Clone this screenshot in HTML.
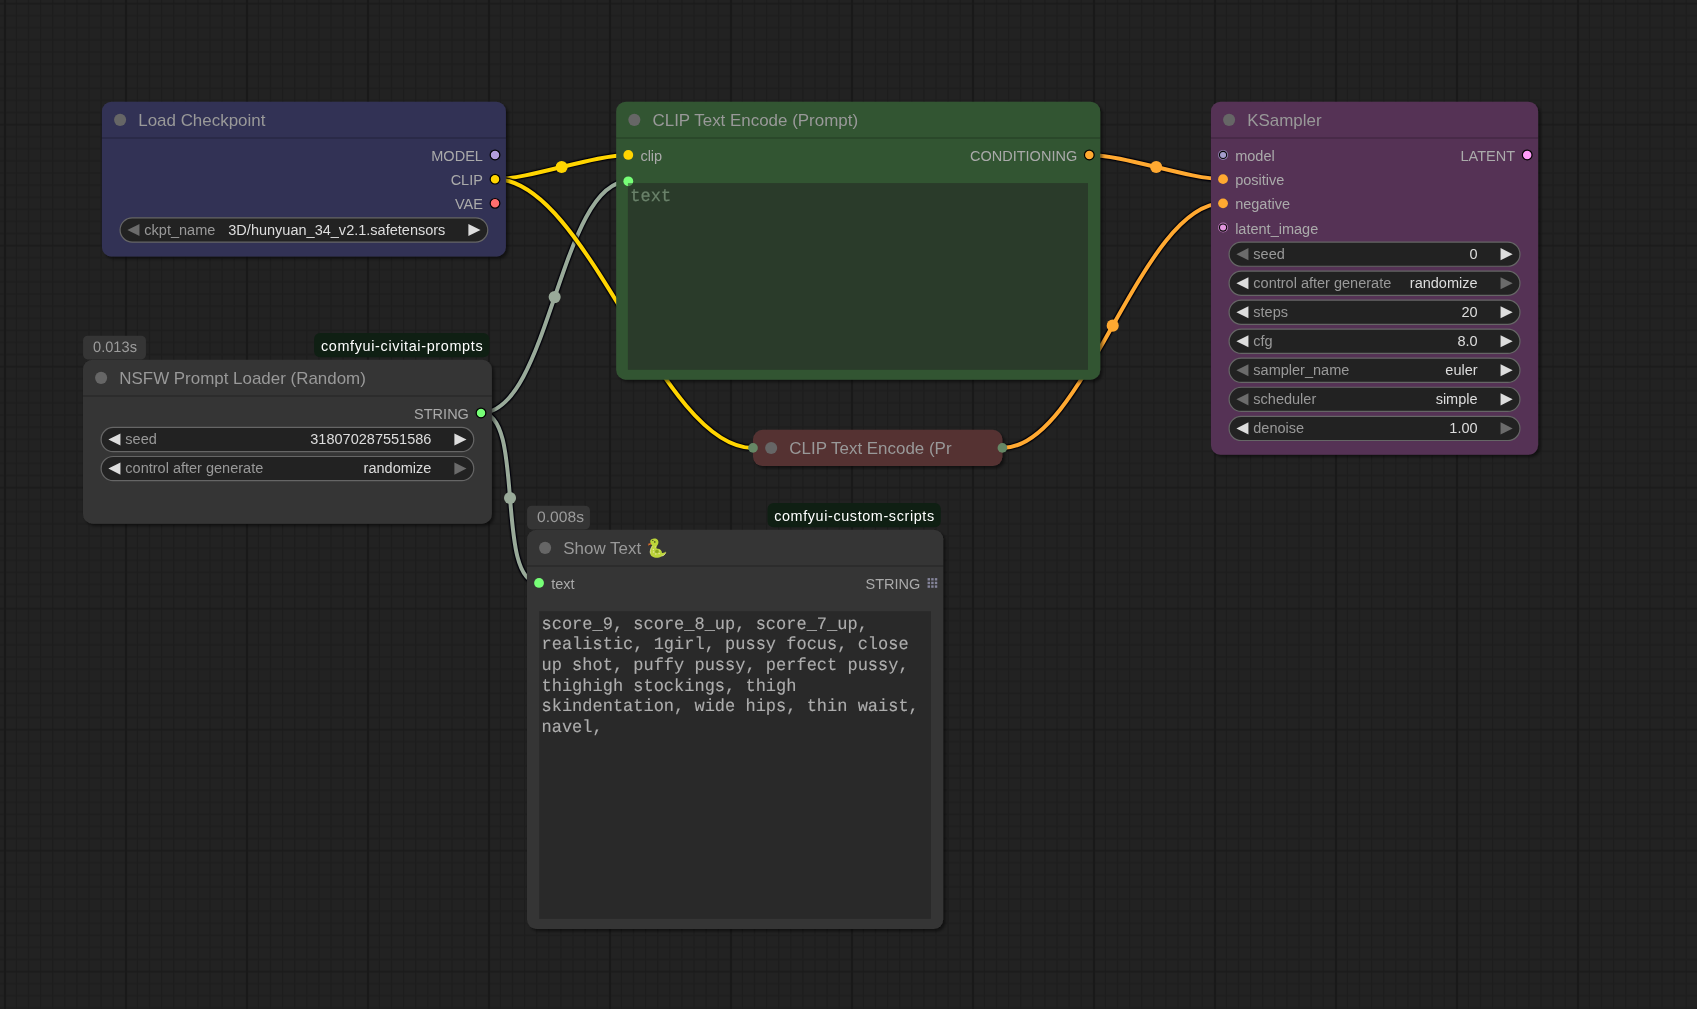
<!DOCTYPE html>
<html lang="en"><head><meta charset="utf-8"><title>ComfyUI</title>
<style>html,body{margin:0;padding:0;background:#222;overflow:hidden}body{width:1697px;height:1009px;font-family:"Liberation Sans",sans-serif}svg{display:block;opacity:.999}svg text{font-family:"Liberation Sans",sans-serif;white-space:pre}svg text.mono{font-family:"Liberation Mono",monospace}</style></head><body>
<svg width="1697" height="1009" viewBox="0 0 1697 1009">
<defs><pattern id="grid" x="5" y="3.6" width="121" height="121" patternUnits="userSpaceOnUse"><rect width="121" height="121" fill="#222"/><g fill="#1d1d1d"><rect x="10.68" y="0" width="1.4" height="121"/><rect x="22.78" y="0" width="1.4" height="121"/><rect x="34.88" y="0" width="1.4" height="121"/><rect x="46.98" y="0" width="1.4" height="121"/><rect x="59.08" y="0" width="1.4" height="121"/><rect x="71.18" y="0" width="1.4" height="121"/><rect x="83.28" y="0" width="1.4" height="121"/><rect x="95.38" y="0" width="1.4" height="121"/><rect x="107.48" y="0" width="1.4" height="121"/><rect x="0" y="11.38" width="121" height="1.4"/><rect x="0" y="23.48" width="121" height="1.4"/><rect x="0" y="35.58" width="121" height="1.4"/><rect x="0" y="47.68" width="121" height="1.4"/><rect x="0" y="59.78" width="121" height="1.4"/><rect x="0" y="71.88" width="121" height="1.4"/><rect x="0" y="83.98" width="121" height="1.4"/><rect x="0" y="96.08" width="121" height="1.4"/><rect x="0" y="108.18" width="121" height="1.4"/></g><g fill="#191919"><rect x="0" y="0" width="1.15" height="121"/><rect x="119.85" y="0" width="1.15" height="121"/><rect x="0" y="0" width="121" height=".7"/><rect x="0" y="120.3" width="121" height=".7"/></g></pattern><filter id="sh" x="-5%" y="-5%" width="110%" height="115%"><feDropShadow dx="2.42" dy="2.42" stdDeviation="1.81" flood-color="#000" flood-opacity=".5"/></filter></defs>
<rect width="1697" height="1009" fill="url(#grid)"/>
<g stroke-linecap="butt">
<path d="M495.01 179.14C528.88 179.14 594.43 154.94 628.3 154.94" fill="none" stroke="#000" stroke-opacity=".16" stroke-width="8.8"/>
<path d="M495.01 179.14C528.88 179.14 594.43 154.94 628.3 154.94" fill="none" stroke="#00000a" stroke-opacity=".85" stroke-width="6.4"/>
<path d="M495.01 179.14C528.88 179.14 594.43 154.94 628.3 154.94" fill="none" stroke="#FFD500" stroke-width="4"/>
<circle cx="561.65" cy="167.04" r="6.05" fill="#FFD500"/>
<path d="M481.01 412.94C549.64 412.94 559.67 181.3 628.3 181.3" fill="none" stroke="#000" stroke-opacity=".16" stroke-width="8.8"/>
<path d="M481.01 412.94C549.64 412.94 559.67 181.3 628.3 181.3" fill="none" stroke="#00000a" stroke-opacity=".85" stroke-width="6.4"/>
<path d="M481.01 412.94C549.64 412.94 559.67 181.3 628.3 181.3" fill="none" stroke="#99AA99" stroke-width="4"/>
<circle cx="554.65" cy="297.12" r="6.05" fill="#99AA99"/>
<path d="M1089.31 154.94C1123.29 154.94 1189.07 179.14 1223.05 179.14" fill="none" stroke="#000" stroke-opacity=".16" stroke-width="8.8"/>
<path d="M1089.31 154.94C1123.29 154.94 1189.07 179.14 1223.05 179.14" fill="none" stroke="#00000a" stroke-opacity=".85" stroke-width="6.4"/>
<path d="M1089.31 154.94C1123.29 154.94 1189.07 179.14 1223.05 179.14" fill="none" stroke="#FFA931" stroke-width="4"/>
<circle cx="1156.18" cy="167.04" r="6.05" fill="#FFA931"/>
<path d="M495.01 179.14C588.16 179.14 659.85 447.95 753 447.95" fill="none" stroke="#000" stroke-opacity=".16" stroke-width="8.8"/>
<path d="M495.01 179.14C588.16 179.14 659.85 447.95 753 447.95" fill="none" stroke="#00000a" stroke-opacity=".85" stroke-width="6.4"/>
<path d="M495.01 179.14C588.16 179.14 659.85 447.95 753 447.95" fill="none" stroke="#FFD500" stroke-width="4"/>
<circle cx="624" cy="313.54" r="6.05" fill="#FFD500"/>
<path d="M1002.4 447.95C1084.76 447.95 1140.69 203.34 1223.05 203.34" fill="none" stroke="#000" stroke-opacity=".16" stroke-width="8.8"/>
<path d="M1002.4 447.95C1084.76 447.95 1140.69 203.34 1223.05 203.34" fill="none" stroke="#00000a" stroke-opacity=".85" stroke-width="6.4"/>
<path d="M1002.4 447.95C1084.76 447.95 1140.69 203.34 1223.05 203.34" fill="none" stroke="#FFA931" stroke-width="4"/>
<circle cx="1112.72" cy="325.64" r="6.05" fill="#FFA931"/>
<path d="M481.01 412.94C525.92 412.94 494.14 582.94 539.05 582.94" fill="none" stroke="#000" stroke-opacity=".16" stroke-width="8.8"/>
<path d="M481.01 412.94C525.92 412.94 494.14 582.94 539.05 582.94" fill="none" stroke="#00000a" stroke-opacity=".85" stroke-width="6.4"/>
<path d="M481.01 412.94C525.92 412.94 494.14 582.94 539.05 582.94" fill="none" stroke="#99AA99" stroke-width="4"/>
<circle cx="510.03" cy="497.94" r="6.05" fill="#99AA99"/>
</g>
<g filter="url(#sh)"><rect x="101.95" y="101.7" width="403.95" height="154.9" rx="9.68" fill="#333355"/></g>
<rect x="101.95" y="137.35" width="403.95" height="1.3" fill="#000" fill-opacity=".24"/>
<circle cx="120.1" cy="119.85" r="6.05" fill="#666"/>
<text x="138.25" y="125.9" font-size="16.94" fill="#999">Load Checkpoint</text>
<circle cx="495.01" cy="154.94" r="4.84" fill="#B39DDB" stroke="#000" stroke-width="1.21"/>
<text x="482.91" y="160.99" font-size="14.52" fill="#aaa" text-anchor="end">MODEL</text>
<circle cx="495.01" cy="179.14" r="4.84" fill="#FFD500" stroke="#000" stroke-width="1.21"/>
<text x="482.91" y="185.19" font-size="14.52" fill="#aaa" text-anchor="end">CLIP</text>
<circle cx="495.01" cy="203.34" r="4.84" fill="#FF6E6E" stroke="#000" stroke-width="1.21"/>
<text x="482.91" y="209.39" font-size="14.52" fill="#aaa" text-anchor="end">VAE</text>
<rect x="120.1" y="217.86" width="367.65" height="24.2" rx="12.1" fill="#222" stroke="#666" stroke-width="1.21"/>
<path d="M139.46 223.91L127.36 229.96L139.46 236.01Z" fill="#6b6b6b"/>
<path d="M468.39 223.91L480.49 229.96L468.39 236.01Z" fill="#ddd"/>
<text x="144.3" y="234.8" font-size="14.52" fill="#999">ckpt_name</text>
<text x="445.4" y="234.8" font-size="14.52" fill="#ddd" text-anchor="end">3D/hunyuan_34_v2.1.safetensors</text>
<rect x="83.05" y="335.66" width="62.9" height="23.8" rx="4.84" fill="#353535"/>
<text transform="translate(93.05 351.61)" text-rendering="geometricPrecision" font-size="15.15" textLength="43.9" lengthAdjust="spacingAndGlyphs" fill="#9c9c9c">0.013s</text>
<rect x="314.1" y="333" width="175.3" height="24.2" rx="6" fill="#0f1f13"/>
<text x="402.08" y="350.5" font-size="14.4" letter-spacing="0.66" fill="#fff" text-anchor="middle">comfyui-civitai-prompts</text>
<g filter="url(#sh)"><rect x="82.95" y="359.7" width="408.95" height="164" rx="9.68" fill="#353535"/></g>
<rect x="82.95" y="395.35" width="408.95" height="1.3" fill="#000" fill-opacity=".24"/>
<circle cx="101.1" cy="377.85" r="6.05" fill="#666"/>
<text x="119.25" y="383.9" font-size="16.94" fill="#999">NSFW Prompt Loader (Random)</text>
<circle cx="481.01" cy="412.94" r="4.84" fill="#77FF77" stroke="#000" stroke-width="1.21"/>
<text x="468.91" y="418.99" font-size="14.52" fill="#aaa" text-anchor="end">STRING</text>
<rect x="101.1" y="427.46" width="372.65" height="24.2" rx="12.1" fill="#222" stroke="#666" stroke-width="1.21"/>
<path d="M120.46 433.51L108.36 439.56L120.46 445.61Z" fill="#ddd"/>
<path d="M454.39 433.51L466.49 439.56L454.39 445.61Z" fill="#ddd"/>
<text x="125.3" y="444.4" font-size="14.52" fill="#999">seed</text>
<text x="431.4" y="444.4" font-size="14.52" fill="#ddd" text-anchor="end">318070287551586</text>
<rect x="101.1" y="456.5" width="372.65" height="24.2" rx="12.1" fill="#222" stroke="#666" stroke-width="1.21"/>
<path d="M120.46 462.55L108.36 468.6L120.46 474.65Z" fill="#ddd"/>
<path d="M454.39 462.55L466.49 468.6L454.39 474.65Z" fill="#6b6b6b"/>
<text x="125.3" y="473.44" font-size="14.52" fill="#999">control after generate</text>
<text x="431.4" y="473.44" font-size="14.52" fill="#ddd" text-anchor="end">randomize</text>
<g filter="url(#sh)"><rect x="753" y="429.8" width="249.4" height="36.3" rx="9.68" fill="#553333"/></g>
<circle cx="771.15" cy="447.95" r="6.05" fill="#666"/>
<text x="789.3" y="454" font-size="16.94" fill="#999">CLIP Text Encode (Pr</text>
<circle cx="753" cy="447.95" r="4.84" fill="#668866"/>
<circle cx="1002.4" cy="447.95" r="4.84" fill="#668866"/>
<g filter="url(#sh)"><rect x="616.2" y="101.7" width="484" height="278" rx="9.68" fill="#335533"/></g>
<rect x="616.2" y="137.35" width="484" height="1.3" fill="#000" fill-opacity=".24"/>
<circle cx="634.35" cy="119.85" r="6.05" fill="#666"/>
<text x="652.5" y="125.9" font-size="16.94" fill="#999">CLIP Text Encode (Prompt)</text>
<circle cx="628.3" cy="154.94" r="4.9" fill="#FFD500"/>
<text x="640.4" y="160.99" font-size="14.52" fill="#aaa">clip</text>
<circle cx="628.3" cy="181.3" r="4.9" fill="#77FF77"/>
<circle cx="1089.31" cy="154.94" r="4.84" fill="#FFA931" stroke="#000" stroke-width="1.21"/>
<text x="1077.21" y="160.99" font-size="14.52" fill="#aaa" text-anchor="end">CONDITIONING</text>
<rect x="627.9" y="183.1" width="460.1" height="186.7" fill="#222" fill-opacity=".5"/>
<text class="mono" text-rendering="geometricPrecision" x="630.3" y="200.6" font-size="17.55" textLength="40.79" lengthAdjust="spacingAndGlyphs" fill="#6a826a" stroke="#6a826a" stroke-width=".25">text</text>
<g filter="url(#sh)"><rect x="1210.95" y="101.7" width="327.15" height="353.1" rx="9.68" fill="#553355"/></g>
<rect x="1210.95" y="137.35" width="327.15" height="1.3" fill="#000" fill-opacity=".24"/>
<circle cx="1229.1" cy="119.85" r="6.05" fill="#666"/>
<text x="1247.25" y="125.9" font-size="16.94" fill="#999">KSampler</text>
<circle cx="1223.05" cy="154.94" r="5.05" fill="#8c7dac"/>
<circle cx="1223.05" cy="154.94" r="4.15" fill="#050505"/>
<circle cx="1223.05" cy="154.94" r="3.05" fill="#a49dcc"/>
<text x="1235.15" y="160.99" font-size="14.52" fill="#aaa">model</text>
<circle cx="1223.05" cy="179.14" r="4.9" fill="#FFA931"/>
<text x="1235.15" y="185.19" font-size="14.52" fill="#aaa">positive</text>
<circle cx="1223.05" cy="203.34" r="4.9" fill="#FFA931"/>
<text x="1235.15" y="209.39" font-size="14.52" fill="#aaa">negative</text>
<circle cx="1223.05" cy="227.54" r="5.05" fill="#b577b5"/>
<circle cx="1223.05" cy="227.54" r="4.15" fill="#050505"/>
<circle cx="1223.05" cy="227.54" r="3.05" fill="#e296de"/>
<text x="1235.15" y="233.59" font-size="14.52" fill="#aaa">latent_image</text>
<circle cx="1527.21" cy="154.94" r="4.84" fill="#FF9CF9" stroke="#000" stroke-width="1.21"/>
<text x="1515.11" y="160.99" font-size="14.52" fill="#aaa" text-anchor="end">LATENT</text>
<rect x="1229.1" y="242.06" width="290.85" height="24.2" rx="12.1" fill="#222" stroke="#666" stroke-width="1.21"/>
<path d="M1248.46 248.11L1236.36 254.16L1248.46 260.21Z" fill="#6b6b6b"/>
<path d="M1500.59 248.11L1512.69 254.16L1500.59 260.21Z" fill="#ddd"/>
<text x="1253.3" y="259" font-size="14.52" fill="#999">seed</text>
<text x="1477.6" y="259" font-size="14.52" fill="#ddd" text-anchor="end">0</text>
<rect x="1229.1" y="271.1" width="290.85" height="24.2" rx="12.1" fill="#222" stroke="#666" stroke-width="1.21"/>
<path d="M1248.46 277.15L1236.36 283.2L1248.46 289.25Z" fill="#ddd"/>
<path d="M1500.59 277.15L1512.69 283.2L1500.59 289.25Z" fill="#6b6b6b"/>
<text x="1253.3" y="288.04" font-size="14.52" fill="#999">control after generate</text>
<text x="1477.6" y="288.04" font-size="14.52" fill="#ddd" text-anchor="end">randomize</text>
<rect x="1229.1" y="300.14" width="290.85" height="24.2" rx="12.1" fill="#222" stroke="#666" stroke-width="1.21"/>
<path d="M1248.46 306.19L1236.36 312.24L1248.46 318.29Z" fill="#ddd"/>
<path d="M1500.59 306.19L1512.69 312.24L1500.59 318.29Z" fill="#ddd"/>
<text x="1253.3" y="317.08" font-size="14.52" fill="#999">steps</text>
<text x="1477.6" y="317.08" font-size="14.52" fill="#ddd" text-anchor="end">20</text>
<rect x="1229.1" y="329.18" width="290.85" height="24.2" rx="12.1" fill="#222" stroke="#666" stroke-width="1.21"/>
<path d="M1248.46 335.23L1236.36 341.28L1248.46 347.33Z" fill="#ddd"/>
<path d="M1500.59 335.23L1512.69 341.28L1500.59 347.33Z" fill="#ddd"/>
<text x="1253.3" y="346.12" font-size="14.52" fill="#999">cfg</text>
<text x="1477.6" y="346.12" font-size="14.52" fill="#ddd" text-anchor="end">8.0</text>
<rect x="1229.1" y="358.22" width="290.85" height="24.2" rx="12.1" fill="#222" stroke="#666" stroke-width="1.21"/>
<path d="M1248.46 364.27L1236.36 370.32L1248.46 376.37Z" fill="#6b6b6b"/>
<path d="M1500.59 364.27L1512.69 370.32L1500.59 376.37Z" fill="#ddd"/>
<text x="1253.3" y="375.16" font-size="14.52" fill="#999">sampler_name</text>
<text x="1477.6" y="375.16" font-size="14.52" fill="#ddd" text-anchor="end">euler</text>
<rect x="1229.1" y="387.26" width="290.85" height="24.2" rx="12.1" fill="#222" stroke="#666" stroke-width="1.21"/>
<path d="M1248.46 393.31L1236.36 399.36L1248.46 405.41Z" fill="#6b6b6b"/>
<path d="M1500.59 393.31L1512.69 399.36L1500.59 405.41Z" fill="#ddd"/>
<text x="1253.3" y="404.2" font-size="14.52" fill="#999">scheduler</text>
<text x="1477.6" y="404.2" font-size="14.52" fill="#ddd" text-anchor="end">simple</text>
<rect x="1229.1" y="416.3" width="290.85" height="24.2" rx="12.1" fill="#222" stroke="#666" stroke-width="1.21"/>
<path d="M1248.46 422.35L1236.36 428.4L1248.46 434.45Z" fill="#ddd"/>
<path d="M1500.59 422.35L1512.69 428.4L1500.59 434.45Z" fill="#6b6b6b"/>
<text x="1253.3" y="433.24" font-size="14.52" fill="#999">denoise</text>
<text x="1477.6" y="433.24" font-size="14.52" fill="#ddd" text-anchor="end">1.00</text>
<rect x="527.05" y="505.66" width="62.9" height="23.8" rx="4.84" fill="#353535"/>
<text transform="translate(537.05 521.61)" text-rendering="geometricPrecision" font-size="15.15" textLength="46.9" lengthAdjust="spacingAndGlyphs" fill="#9c9c9c">0.008s</text>
<rect x="767.5" y="503" width="173.3" height="24.2" rx="6" fill="#0f1f13"/>
<text x="854.45" y="520.5" font-size="14.4" letter-spacing="0.61" fill="#fff" text-anchor="middle">comfyui-custom-scripts</text>
<g filter="url(#sh)"><rect x="526.95" y="529.7" width="416.35" height="399.3" rx="9.68" fill="#353535"/></g>
<rect x="526.95" y="565.35" width="416.35" height="1.3" fill="#000" fill-opacity=".24"/>
<circle cx="545.1" cy="547.85" r="6.05" fill="#666"/>
<text x="563.25" y="553.9" font-size="16.94" fill="#999">Show Text</text>
<g transform="translate(647 538)"><path d="M3.2 3.6C3.2 1.4 5.4 .6 7.4 .6C10.2 .6 11.8 2.6 11.4 5C11.1 6.8 9.6 8 9.4 9.6C9.3 10.4 9.8 10.8 10.6 10.8C12.8 10.6 15 12.4 15 15C16.6 15.2 18 14.6 19 13.6C18.8 16.2 17.2 18 14.6 18.2C13 19.4 10.6 19.9 8.6 19.7C5.2 19.5 2.8 17.2 2.9 13.8C3 11.2 4.6 9.4 5.2 7.4C4.2 6.8 3.2 5.4 3.2 3.6Z" fill="#bcd53a"/><path d="M5 8.4C3.7 10.6 3 12.6 3.3 15" fill="none" stroke="#e3e0a6" stroke-width=".8" stroke-linecap="round"/><path d="M14.8 18C16.6 17.8 17.8 16.6 18.6 15" fill="none" stroke="#e3e0a6" stroke-width=".7" stroke-linecap="round"/><ellipse cx="9.9" cy="13.4" rx="1.8" ry="1.6" fill="#8ea922"/><path d="M3.9 4.9L.6 6L1.7 6.4L.9 7.8L4.2 6.2Z" fill="#e5702a"/><circle cx="5.8" cy="2.4" r=".65" fill="#3f4a1a"/><ellipse cx="7.8" cy="3.9" rx=".7" ry=".95" fill="#3f4a1a"/><g fill="#e3e0a6"><circle cx="6.4" cy="11.4" r=".75"/><circle cx="6.6" cy="13.9" r=".75"/><circle cx="8.8" cy="15.9" r=".75"/><circle cx="12.1" cy="15.4" r=".75"/><circle cx="8.3" cy="8.9" r=".55"/><circle cx="12.6" cy="12.8" r=".55"/></g></g>
<circle cx="539.05" cy="582.94" r="4.9" fill="#77FF77"/>
<text x="551.15" y="588.99" font-size="14.52" fill="#aaa">text</text>
<g fill="#85859b"><rect x="927.57" y="578.1" width="2.42" height="2.42"/><rect x="931.2" y="578.1" width="2.42" height="2.42"/><rect x="934.83" y="578.1" width="2.42" height="2.42"/><rect x="927.57" y="581.73" width="2.42" height="2.42"/><rect x="931.2" y="581.73" width="2.42" height="2.42"/><rect x="934.83" y="581.73" width="2.42" height="2.42"/><rect x="927.57" y="585.36" width="2.42" height="2.42"/><rect x="931.2" y="585.36" width="2.42" height="2.42"/><rect x="934.83" y="585.36" width="2.42" height="2.42"/></g>
<text x="920.31" y="588.99" font-size="14.52" fill="#aaa" text-anchor="end">STRING</text>
<rect x="539.15" y="611.2" width="391.8" height="307.7" fill="#222" fill-opacity=".6"/>
<g class="mono" text-rendering="geometricPrecision" font-size="17.55" fill="#adadad" stroke="#adadad" stroke-width=".12">
<text class="mono" x="541.5" y="628.6" textLength="326.34" lengthAdjust="spacingAndGlyphs">score_9, score_8_up, score_7_up,</text>
<text class="mono" x="541.5" y="649.28" textLength="367.13" lengthAdjust="spacingAndGlyphs">realistic, 1girl, pussy focus, close</text>
<text class="mono" x="541.5" y="669.96" textLength="367.13" lengthAdjust="spacingAndGlyphs">up shot, puffy pussy, perfect pussy,</text>
<text class="mono" x="541.5" y="690.64" textLength="254.95" lengthAdjust="spacingAndGlyphs">thighigh stockings, thigh</text>
<text class="mono" x="541.5" y="711.32" textLength="377.33" lengthAdjust="spacingAndGlyphs">skindentation, wide hips, thin waist,</text>
<text class="mono" x="541.5" y="732" textLength="61.19" lengthAdjust="spacingAndGlyphs">navel,</text>
</g>
</svg></body></html>
